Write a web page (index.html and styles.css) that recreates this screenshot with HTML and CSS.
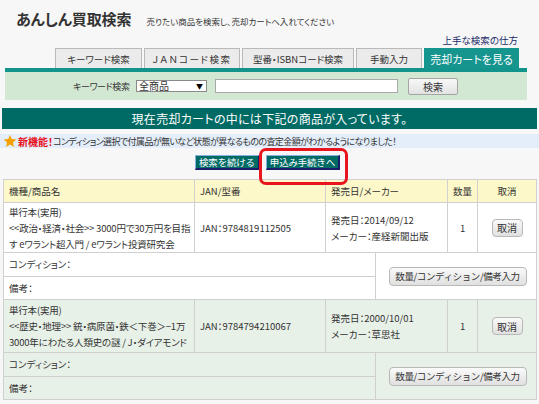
FILE: index.html
```html
<!DOCTYPE html>
<html lang="ja">
<head>
<meta charset="utf-8">
<title>あんしん買取検索</title>
<link rel="stylesheet" href="styles.css">
</head>
<body>
<div class="page">
  <header class="top">
    <h1 class="title">あんしん買取検索</h1>
    <span class="sub">売りたい商品を検索し、売却カートへ入れてください</span>
  </header>
  <div class="help"><a href="#" class="help-link">上手な検索の仕方</a></div>
  <nav class="tabs">
    <a class="tab t1" href="#">キーワード検索</a>
    <a class="tab t2" href="#">ＪＡＮコード検索</a>
    <a class="tab t3" href="#">型番・ISBNコード検索</a>
    <a class="tab t4" href="#">手動入力</a>
    <a class="tab t5 active" href="#">売却カートを見る</a>
  </nav>
  <div class="search">
    <span class="search-label">キーワード検索</span>
    <div class="select-box"><span class="select-text">全商品</span><span class="select-arrow">▼</span></div>
    <div class="text-input"></div>
    <button class="search-btn" type="button">検索</button>
  </div>
  <div class="banner">現在売却カートの中には下記の商品が入っています。</div>
  <div class="notice">
    <svg class="star" width="14" height="14" viewBox="0 0 24 24"><path d="M12 1.5l3.1 7.2 7.8.7-5.9 5.2 1.8 7.7L12 18.2l-6.8 4.1 1.8-7.7-5.9-5.2 7.8-.7z" fill="#f5a000"/></svg>
    <span class="new">新機能！</span><span class="notice-text">コンディション選択で付属品が無いなど状態が異なるものの査定金額がわかるようになりました！</span>
  </div>
  <div class="actions">
    <button class="act-btn" type="button">検索を続ける</button>
    <span class="highlight-wrap">
      <button class="act-btn" type="button">申込み手続きへ</button>
      <span class="highlight"></span>
    </span>
  </div>
  <table class="cart">
    <colgroup>
      <col class="c1"><col class="c2"><col class="c3a"><col class="c3b"><col class="c4"><col class="c5">
    </colgroup>
    <thead>
      <tr class="head">
        <th>機種/商品名</th>
        <th>JAN/型番</th>
        <th colspan="2">発売日/メーカー</th>
        <th class="center">数量</th>
        <th class="center">取消</th>
      </tr>
    </thead>
    <tbody class="item odd">
      <tr class="main r1">
        <td class="name">単行本(実用)<br>&lt;&lt;政治・経済・社会&gt;&gt; 3000円で30万円を目指<br>す eワラント超入門 / eワラント投資研究会</td>
        <td class="jan">JAN：9784819112505</td>
        <td colspan="2" class="rel">発売日：2014/09/12<br>メーカー：産経新聞出版</td>
        <td class="center">1</td>
        <td class="center"><button class="cancel" type="button">取消</button></td>
      </tr>
      <tr class="sub-row">
        <td colspan="3">コンディション：</td>
        <td colspan="3" rowspan="2" class="center"><button class="edit" type="button">数量/コンディション/備考入力</button></td>
      </tr>
      <tr class="sub-row">
        <td colspan="3">備考：</td>
      </tr>
    </tbody>
    <tbody class="item even">
      <tr class="main r2">
        <td class="name">単行本(実用)<br>&lt;&lt;歴史・地理&gt;&gt; 銃・病原菌・鉄＜下巻＞−1万<br>3000年にわたる人類史の謎 / J・ダイアモンド</td>
        <td class="jan">JAN：9784794210067</td>
        <td colspan="2" class="rel">発売日：2000/10/01<br>メーカー：草思社</td>
        <td class="center">1</td>
        <td class="center"><button class="cancel" type="button">取消</button></td>
      </tr>
      <tr class="sub-row">
        <td colspan="3">コンディション：</td>
        <td colspan="3" rowspan="2" class="center"><button class="edit" type="button">数量/コンディション/備考入力</button></td>
      </tr>
      <tr class="sub-row">
        <td colspan="3">備考：</td>
      </tr>
    </tbody>
  </table>
</div>
</body>
</html>
```

FILE: styles.css
```css
* { box-sizing: border-box; }
html, body { margin: 0; padding: 0; }
body {
  background: #f7f7f7;
  font-family: "Noto Sans CJK JP", "Liberation Sans", sans-serif;
  font-feature-settings: "palt";
  color: #333;
  font-size: 10px;
  width: 539px;
  height: 404px;
  overflow: hidden;
}
.page { padding: 0; }

.top {
  display: flex;
  align-items: baseline;
  padding: 8px 0 0 16px;
  height: 33px;
}
.title {
  margin: 0;
  font-size: 15px;
  font-weight: bold;
  color: #333;
  letter-spacing: -0.1px;
}
.sub {
  margin-left: 15px;
  font-size: 8.5px;
  color: #333;
}

.help {
  display: flex;
  justify-content: flex-end;
  padding-right: 21px;
  height: 15px;
  line-height: 14px;
}
.help-link {
  color: #1a2a6a;
  text-decoration: none;
  font-size: 9.5px;
}

.tabs {
  display: flex;
  align-items: flex-end;
  gap: 2px;
  margin: 0 12px 0 5px;
  padding-left: 50px;
  border-bottom: 4px solid #12938c;
  height: 24px;
}
.tab {
  display: flex;
  align-items: center;
  justify-content: center;
  height: 20px;
  background: #ebebeb;
  border: 1px solid #b9b9b9;
  border-bottom: none;
  color: #333;
  text-decoration: none;
  font-size: 9.5px;
  white-space: nowrap;
}
.t1 { width: 87px; }
.t2 { width: 96px; letter-spacing: 1.5px; }
.t3 { width: 112px; }
.t4 { width: 66px; }
.t5 { width: 95px; }
.tab.active {
  background: #16958f;
  border-color: #16958f;
  color: #fff;
  font-size: 11px;
}

.search {
  display: flex;
  align-items: center;
  margin: 0 12px 0 5px;
  height: 28px;
  background: #d3e8d3;
  padding-left: 68px;
}
.search-label {
  flex: none;
  font-size: 9px;
  letter-spacing: -0.4px;
  width: 63px;
  white-space: nowrap;
}
.select-box {
  display: flex;
  align-items: center;
  justify-content: space-between;
  width: 71px;
  height: 12px;
  background: #fff;
  border: 1px solid #8a8a8a;
  padding: 0 3px 0 2px;
  font-size: 10px;
  line-height: 10px;
}
.select-arrow { font-size: 7px; color: #000; }
.text-input {
  margin-left: 8px;
  width: 183px;
  height: 14px;
  background: #fff;
  border: 1px solid #a9a9a9;
}
.search-btn {
  margin-left: 10px;
  width: 50px;
  height: 17px;
  padding: 0;
  font-family: inherit;
  font-size: 10px;
  color: #333;
  background: linear-gradient(#f8f8f8, #e2e2e2);
  border: 1px solid #a5a5a5;
  border-radius: 2px;
}

.banner {
  margin: 8px 2px 0 2px;
  height: 21px;
  background: #006b65;
  color: #fff;
  font-size: 12px;
  display: flex;
  align-items: center;
  justify-content: center;
  letter-spacing: 0.3px;
}

.notice {
  margin-top: 5px;
  height: 14px;
  background: #e3eefa;
  display: flex;
  align-items: center;
  padding-left: 3px;
  font-size: 9px;
  white-space: nowrap;
}
.star { flex: none; margin-right: 1px; }
.new { color: #e8141e; font-weight: bold; font-size: 10px; }
.notice-text { color: #333; letter-spacing: -0.6px; }

.actions {
  display: flex;
  justify-content: center;
  gap: 6px;
  margin-top: 7px;
  height: 18px;
  padding-right: 4px;
}
.act-btn {
  height: 15px;
  padding: 0 3px;
  font-family: inherit;
  font-size: 9.5px;
  letter-spacing: -0.2px;
  color: #fff;
  background: #006b65;
  border-top: 1px solid #8ab0e0;
  border-left: 1px solid #8ab0e0;
  border-right: 2px solid #1c1c6c;
  border-bottom: 2px solid #1c1c6c;
  line-height: 11px;
}
.highlight-wrap { position: relative; display: inline-flex; }
.highlight {
  position: absolute;
  left: -7px;
  right: -8px;
  top: -7px;
  bottom: -12px;
  border: 3px solid #e8141e;
  border-radius: 7px;
  pointer-events: none;
}

.cart {
  margin: 6px 0 0 3px;
  width: 533px;
  border-collapse: collapse;
  table-layout: fixed;
  font-size: 9.5px;
}
.c1 { width: 191px; }
.c2 { width: 131px; }
.c3a { width: 50px; }
.c3b { width: 72px; }
.c4 { width: 30px; }
.c5 { width: 59px; }
.cart th, .cart td {
  border: 1px solid #d0d0d0;
  padding: 0 5px;
  text-align: left;
  font-weight: normal;
  vertical-align: middle;
}
.cart .center { text-align: center; padding: 0; }
.head th { background: #fcf8c9; height: 23px; }
.item.odd td { background: #fff; }
.item.even td { background: #e8f1e8; }
.main td { line-height: 16px; }
.r1 td { height: 50px; }
.r2 td { height: 53px; }
.name { white-space: nowrap; overflow: hidden; letter-spacing: -0.2px; }
.jan { white-space: nowrap; }
.rel { white-space: nowrap; }
.sub-row td { height: 23.5px; }

.cancel {
  width: 31px;
  height: 18px;
  padding: 0;
  font-family: inherit;
  font-size: 10px;
  color: #333;
  background: linear-gradient(#fafafa, #e0e0e0);
  border: 1px solid #b8b8b8;
  border-radius: 4px;
}
.edit {
  margin-left: 3px;
  width: 138px;
  height: 19px;
  padding: 0;
  font-family: inherit;
  font-size: 9.5px;
  letter-spacing: -0.4px;
  white-space: nowrap;
  color: #333;
  background: linear-gradient(#fafafa, #e0e0e0);
  border: 1px solid #b8b8b8;
  border-radius: 4px;
}
```
